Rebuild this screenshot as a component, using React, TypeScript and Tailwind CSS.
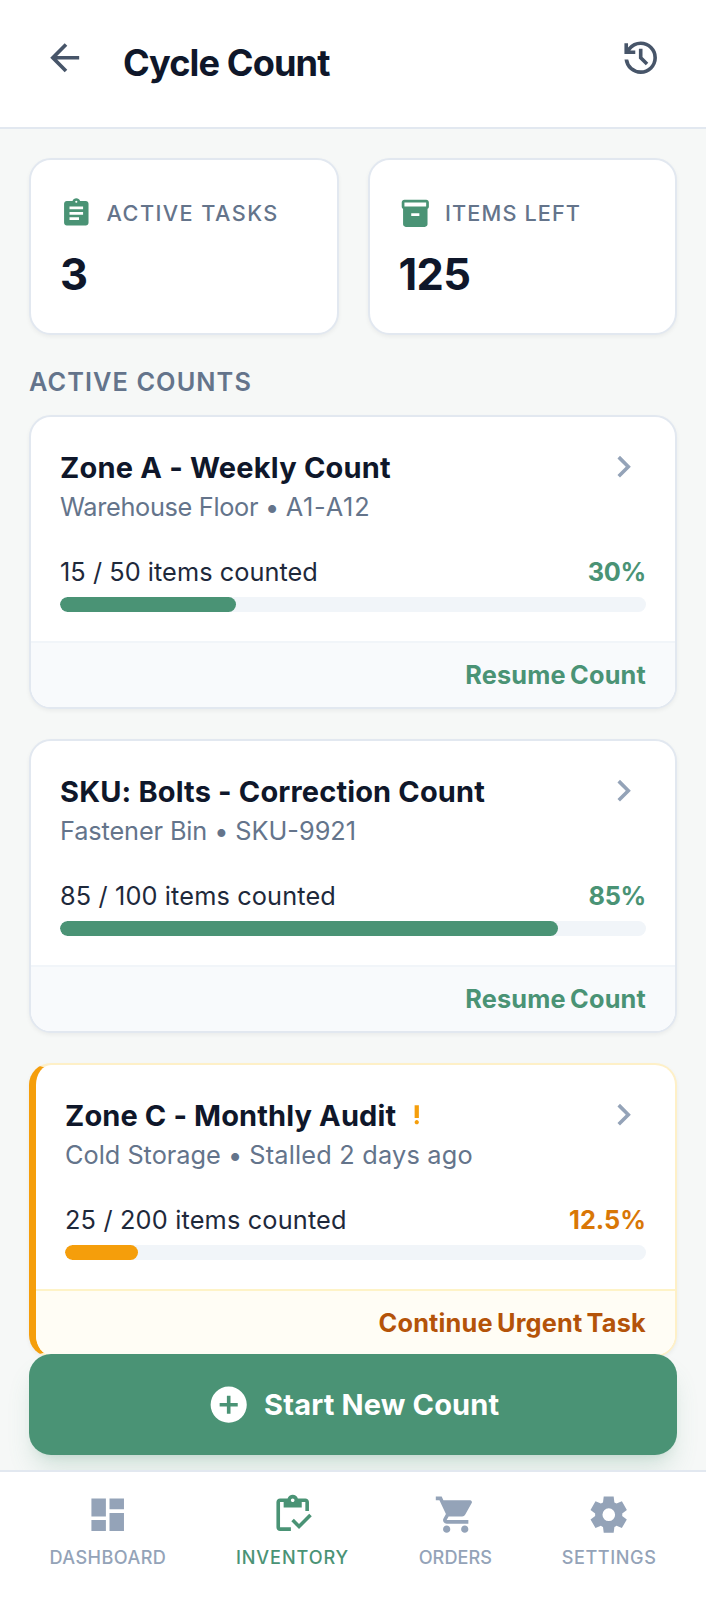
import type { ReactNode } from "react";

const PATHS = {
  back: "m313-440 224 224-57 56-320-320 320-320 57 56-224 224h487v80H313Z",
  history:
    "M480-120q-138 0-240.5-91.5T122-440h82q14 104 92.5 172T480-200q117 0 198.5-81.5T760-480q0-117-81.5-198.5T480-760q-69 0-129 32t-101 88h110v80H120v-240h80v94q51-64 124.5-99T480-840q75 0 140.5 28.5t114 77q48.5 48.5 77 114T840-480q0 75-28.5 140.5t-77 114q-48.5 48.5-114 77T480-120Zm112-192L440-464v-216h80v184l128 128-56 56Z",
  assignment:
    "M200-120q-33 0-56.5-23.5T120-200v-560q0-33 23.5-56.5T200-840h168q13-36 43.5-58t68.5-22q38 0 68.5 22t43.5 58h168q33 0 56.5 23.5T840-760v560q0 33-23.5 56.5T760-120H200Zm80-160h280v-80H280v80Zm0-160h400v-80H280v80Zm0-160h400v-80H280v80Zm200-190q13 0 21.5-8.5T510-820q0-13-8.5-21.5T480-850q-13 0-21.5 8.5T450-820q0 13 8.5 21.5T480-790Z",
  box: "M200-80q-33 0-56.5-23.5T120-160v-451q-18-11-29-28.5T80-680v-120q0-33 23.5-56.5T160-880h640q33 0 56.5 23.5T880-800v120q0 23-11 40.5T840-611v451q0 33-23.5 56.5T760-80H200Zm-40-600h640v-120H160v120Zm200 280h240v-80H360v80Z",
  chevron: "M504-480 320-664l56-56 240 240-240 240-56-56 184-184Z",
  alert:
    "M480-120q-33 0-56.5-23.5T400-200q0-33 23.5-56.5T480-280q33 0 56.5 23.5T560-200q0 33-23.5 56.5T480-120Zm-80-240v-480h160v480H400Z",
  add: "M440-280h80v-160h160v-80H520v-160h-80v160H280v80h160v160Zm40 200q-83 0-156-31.5T197-197q-54-54-85.5-127T80-480q0-83 31.5-156T197-763q54-54 127-85.5T480-880q83 0 156 31.5T763-763q54 54 85.5 127T880-480q0 83-31.5 156T763-197q-54 54-127 85.5T480-80Z",
  dashboard:
    "M520-600v-240h320v240H520ZM120-440v-400h320v400H120Zm400 320v-400h320v400H520Zm-400 0v-240h320v240H120Z",
  inventory:
    "M200-120q-33 0-56.5-23.5T120-200v-560q0-33 23.5-56.5T200-840h167q11-35 43-57.5t70-22.5q40 0 71.5 22.5T594-840h166q33 0 56.5 23.5T840-760v200h-80v-200h-80v120H280v-120h-80v560h240v80H200Zm420-43L450-333l56-56 114 114 226-226 56 56-282 282ZM480-760q17 0 28.5-11.5T520-800q0-17-11.5-28.5T480-840q-17 0-28.5 11.5T440-800q0 17 11.5 28.5T480-760Z",
  cart: "M280-80q-33 0-56.5-23.5T200-160q0-33 23.5-56.5T280-240q33 0 56.5 23.5T360-160q0 33-23.5 56.5T280-80Zm400 0q-33 0-56.5-23.5T600-160q0-33 23.5-56.5T680-240q33 0 56.5 23.5T760-160q0 33-23.5 56.5T680-80ZM208-800h590q23 0 35 20.5t1 41.5L692-482q-11 20-29.5 31T622-440H324l-44 80h480v80H280q-45 0-68-39.5t-2-78.5l54-98-144-304H40v-80h130l38 80Z",
  settings:
    "m370-80-16-128q-13-5-24.5-12T307-235l-119 50L78-375l103-78q-1-7-1-13.5v-27q0-6.5 1-13.5L78-585l110-190 119 50q11-8 23-15t24-12l16-128h220l16 128q13 5 24.5 12t22.5 15l119-50 110 190-103 78q1 7 1 13.5v27q0 6.5-2 13.5l103 78-110 190-118-50q-11 8-23 15t-24 12L590-80H370Zm112-260q58 0 99-41t41-99q0-58-41-99t-99-41q-59 0-99.5 41T342-480q0 58 40.5 99t99.5 41Z",
};

type IconName = keyof typeof PATHS;

function Icon({ name, className }: { name: IconName; className: string }) {
  return (
    <svg viewBox="0 -960 960 960" fill="currentColor" className={`shrink-0 ${className}`} aria-hidden="true">
      <path d={PATHS[name]} />
    </svg>
  );
}

function Stat({ icon, label, value, labelClass }: { icon: IconName; label: string; value: string; labelClass: string }) {
  return (
    <div className="h-[177px] rounded-[22px] border-2 border-[#e2e8f0] bg-white px-[29px] pt-[28.5px] shadow-[0_2px_4px_rgba(0,0,0,0.05)]">
      <div className="flex h-[51px] items-center gap-[14px]">
        <Icon name={icon} className="size-[32.6px] text-[#4a9375]" />
        <span className={`pt-[0.5px] text-[21.7px] leading-none font-medium text-[#64748b] ${labelClass}`}>{label}</span>
      </div>
      <div className="mt-[5.5px] text-[43.4px] leading-[58px] font-bold tracking-[-0.6px] text-[#0f172a]">{value}</div>
    </div>
  );
}

interface CountProps {
  title: string;
  place: string;
  note: string;
  counted: string;
  percent: number;
  action: string;
  urgent?: boolean;
  titleClass: string;
  placeClass: string;
  noteClass: string;
  countedClass: string;
}

function CountCard(props: CountProps) {
  const { title, place, note, counted, percent, action, urgent } = props;
  return (
    <article
      className={`shrink-0 overflow-hidden rounded-[22px] border-2 bg-white shadow-[0_2px_4px_rgba(0,0,0,0.05)] ${
        urgent ? "border-[#fef0c7] border-l-[7px] border-l-[#f59e0b]" : "border-[#e2e8f0]"
      }`}
    >
      <div className="p-[29px]">
        <div className="flex h-[43px] items-center justify-between">
          <h3 className="flex items-center gap-[8px] text-[29px] leading-none font-bold text-[#0f172a]">
            <span className={props.titleClass}>{title}</span>
            {urgent && <Icon name="alert" className="size-[25.5px] text-[#f59e0b]" />}
          </h3>
          <Icon name="chevron" className="mb-px size-[43.4px] text-[#94a3b8]" />
        </div>
        <p className="h-9 text-[25.3px] leading-9 text-[#64748b]">
          <span className={props.placeClass}>{place} • </span>
          <span className={props.noteClass}>{note}</span>
        </p>
        <div className="mt-[29px] flex h-9 items-center justify-between text-[25.3px] leading-9">
          <span className={`text-[#1e293b] ${props.countedClass}`}>{counted}</span>
          <span className={`font-bold ${urgent ? "text-[#d97706]" : "tracking-[-0.3px] text-[#4a9375]"}`}>{percent}%</span>
        </div>
        <div className="mt-[7px] h-[15px] overflow-hidden rounded-full bg-[#f1f5f9]">
          <div className={`h-full rounded-full ${urgent ? "bg-[#f59e0b]" : "bg-[#4a9375]"}`} style={{ width: `${percent}%` }} />
        </div>
      </div>
      <div
        className={`flex h-[66px] items-center justify-end border-t-2 px-[29px] pt-px text-[25.3px] leading-none font-bold tracking-[0.2px] [word-spacing:-2px] ${
          urgent ? "border-[#fef3c7] bg-[#fffdf5] text-[#b45309]" : "border-[#f1f5f9] bg-[#f8fafc] text-[#4a9375]"
        }`}
      >
        {action}
      </div>
    </article>
  );
}

function NavItem({ icon, active, labelClass, children }: { icon: IconName; active?: boolean; labelClass: string; children: ReactNode }) {
  return (
    <a className={`flex flex-col items-center ${active ? "text-[#4a9375]" : "text-[#94a3b8]"}`}>
      <Icon name={icon} className="size-[43.4px]" />
      <span className={`mt-[7.6px] text-[18.1px] leading-[27px] font-medium ${labelClass}`}>{children}</span>
    </a>
  );
}

export default function App() {
  return (
    <div className="relative flex h-[1600px] w-[706px] flex-col overflow-hidden bg-[#f6f8f7] font-['Inter',sans-serif]">
      <header className="flex h-[128.5px] shrink-0 items-start justify-between border-b-2 border-[#e2e8f0] bg-white px-[43.5px] pt-[36px]">
        <div className="flex items-start">
          <Icon name="back" className="-ml-[0.5px] size-[43.4px] text-[#475569]" />
          <h1 className="mt-[5px] ml-[36.5px] text-[36.2px] leading-[45px] font-bold tracking-[-0.9px] text-[#0f172a]">Cycle Count</h1>
        </div>
        <Icon name="history" className="size-[43.4px] text-[#475569]" />
      </header>

      <main className="flex min-h-0 flex-1 flex-col overflow-hidden px-[29px] pt-[29px]">
        <section className="grid shrink-0 grid-cols-2 gap-[29px]">
          <Stat icon="assignment" label="ACTIVE TASKS" value="3" labelClass="tracking-[1.42px]" />
          <Stat icon="box" label="ITEMS LEFT" value="125" labelClass="tracking-[1.1px]" />
        </section>
        <h2 className="mt-[29.5px] mb-[14.5px] h-9 shrink-0 text-[25.3px] leading-9 font-semibold tracking-[1.08px] text-[#64748b]">
          ACTIVE COUNTS
        </h2>
        <section className="flex flex-col gap-[30px]">
          <CountCard
            title="Zone A - Weekly Count"
            place="Warehouse Floor"
            note="A1-A12"
            counted="15 / 50 items counted"
            percent={30}
            action="Resume Count"
            titleClass="tracking-[0.2px]"
            placeClass="tracking-[-0.32px]"
            noteClass="tracking-[0.8px]"
            countedClass="tracking-[0.05px]"
          />
          <CountCard
            title="SKU: Bolts - Correction Count"
            place="Fastener Bin"
            note="SKU-9921"
            counted="85 / 100 items counted"
            percent={85}
            action="Resume Count"
            titleClass="tracking-[0.15px]"
            placeClass="tracking-[-0.12px]"
            noteClass="tracking-normal"
            countedClass="tracking-[0.13px]"
          />
          <CountCard
            title="Zone C - Monthly Audit"
            place="Cold Storage"
            note="Stalled 2 days ago"
            counted="25 / 200 items counted"
            percent={12.5}
            action="Continue Urgent Task"
            urgent
            titleClass="tracking-[0.12px]"
            placeClass="tracking-normal"
            noteClass="tracking-[0.2px]"
            countedClass="tracking-[0.17px]"
          />
        </section>
      </main>

      <nav className="z-10 flex h-[130px] shrink-0 items-start justify-between border-t-2 border-[#e2e8f0] bg-white px-[49.5px] pt-[21px]">
        <NavItem icon="dashboard" labelClass="tracking-[0.42px]">
          DASHBOARD
        </NavItem>
        <NavItem icon="inventory" active labelClass="tracking-[0.9px]">
          INVENTORY
        </NavItem>
        <NavItem icon="cart" labelClass="tracking-[0.05px]">
          ORDERS
        </NavItem>
        <NavItem icon="settings" labelClass="tracking-[0.6px]">
          SETTINGS
        </NavItem>
      </nav>

      <button className="absolute inset-x-[29px] bottom-[145px] flex h-[101px] items-center justify-center gap-[14px] rounded-[22px] bg-[#4a9375] text-[29px] leading-none font-bold tracking-[0.15px] text-white shadow-[0_18px_27px_-5px_rgba(74,147,117,0.2),0_7px_11px_-7px_rgba(74,147,117,0.2)]">
        <Icon name="add" className="size-[43.4px]" />
        Start New Count
      </button>
    </div>
  );
}
